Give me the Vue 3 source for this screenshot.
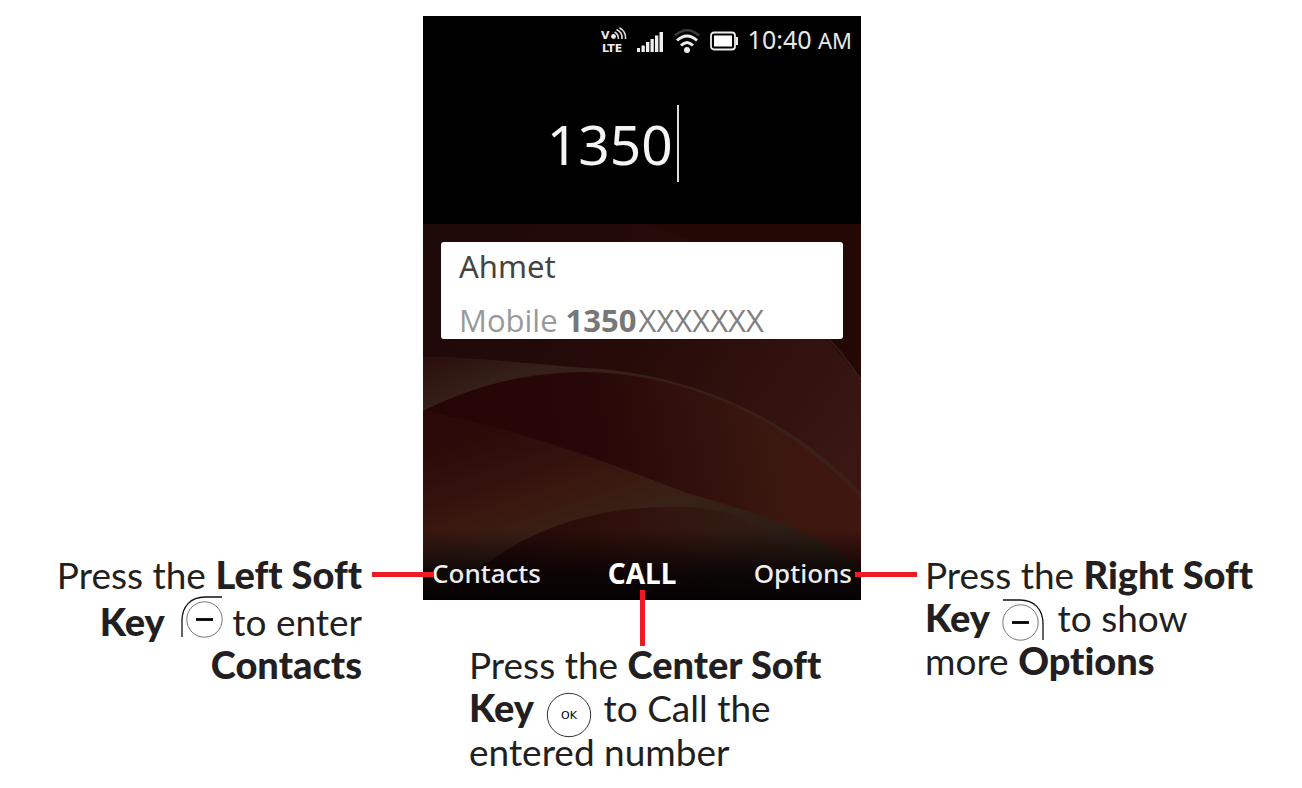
<script setup>
import { ref } from 'vue'

const number = ref('1350')
const contact = { name: 'Ahmet', type: 'Mobile', match: '1350', rest: 'XXXXXXX' }
</script>

<template>
  <main class="guide">
    <section class="side left">
      <p class="caption">
        Press the <b>Left Soft</b><br />
        <b>Key</b>
        <svg class="key-left" width="42" height="42" viewBox="0 0 42 42" role="img" aria-label="left soft key">
          <path d="M1 41V25C1 10 10 1 24 1H41" fill="none" stroke="#111" stroke-width="1.3" />
          <circle cx="23.500" cy="23.500" r="17.700" fill="none" stroke="#777" stroke-width="1" />
          <path d="M15 23.500H32" stroke="#000" stroke-width="2.800" />
        </svg>
        to enter<br />
        <b>Contacts</b>
      </p>
      <span class="lead"></span>
    </section>

    <section class="middle">
      <div class="phone">
        <header class="top">
          <div class="status">
            <svg class="volte" width="27" height="28" viewBox="0 0 27 28" role="img" aria-label="VoLTE">
              <text x="0" y="12" class="net">V</text>
              <text x="1" y="25" class="net">LTE</text>
              <circle cx="12.500" cy="9.500" r="2.400" fill="#eee" />
              <path d="M13.500 5Q17.500 7 17.500 12M15.500 2.500Q21.500 5 21 12M18.500 0.800Q25.500 5 24.500 12" fill="none" stroke="#ddd" stroke-width="1.600" />
            </svg>
            <svg class="signal" width="27" height="23" viewBox="0 0 27 23" role="img" aria-label="signal">
              <path d="M0 18h3v4H0zM4.500 15.500h3.300V22h-3.300zM9 12h3.300v10H9zM13.500 9h3.300v13h-3.300zM18 5.500h3.300V22h-3.300zM22.500 2h3.500v20h-3.500z" fill="#eee" />
            </svg>
            <svg class="wifi" width="28" height="26" viewBox="0 0 28 26" fill="none" role="img" aria-label="wifi">
              <path d="M2 7.500Q14-3 26 7.500" stroke="#3a3a3a" stroke-width="2.600" />
              <path d="M4 12.500Q14 3.500 24 12.500" stroke="#eee" stroke-width="3" />
              <path d="M8 17.500Q14 11.500 20 17.500" stroke="#eee" stroke-width="3" />
              <circle cx="14" cy="22" r="3" fill="#eee" />
            </svg>
            <svg class="battery" width="29" height="20" viewBox="0 0 29 20" role="img" aria-label="battery">
              <rect x="1" y="1.500" width="24" height="17" rx="3" fill="none" stroke="#eee" stroke-width="1.800" />
              <rect x="4" y="4.500" width="18" height="11" fill="#fff" />
              <path d="M26 6h2v8h-2z" fill="#eee" />
            </svg>
            <time class="clock">10:40 <small>AM</small></time>
          </div>
          <div class="dial">
            <input v-model="number" class="digits" type="tel" aria-label="Phone number" />
            <span class="caret"></span>
          </div>
        </header>

        <div class="screen">
          <svg class="wallpaper" viewBox="0 0 438 376" preserveAspectRatio="none" aria-hidden="true">
            <defs>
              <linearGradient id="base" x1="0" y1="0" x2="1" y2="0.6">
                <stop offset="0" stop-color="#1d0908" />
                <stop offset="0.5" stop-color="#260b09" />
                <stop offset="1" stop-color="#3a1712" />
              </linearGradient>
              <linearGradient id="rim" x1="0" y1="0" x2="1" y2="0">
                <stop offset="0" stop-color="#35201a" />
                <stop offset="0.5" stop-color="#362017" />
                <stop offset="1" stop-color="#3b2018" />
              </linearGradient>
              <linearGradient id="glow" gradientUnits="userSpaceOnUse" x1="0" y1="130" x2="20" y2="180">
                <stop offset="0" stop-color="#2a0d0a" />
                <stop offset="1" stop-color="#2a0d0a" stop-opacity="0" />
              </linearGradient>
              <linearGradient id="petal" x1="0" y1="0.2" x2="1" y2="0.1">
                <stop offset="0" stop-color="#260507" />
                <stop offset="0.4" stop-color="#280708" />
                <stop offset="0.75" stop-color="#39170f" />
                <stop offset="1" stop-color="#421611" />
              </linearGradient>
              <linearGradient id="fold" gradientUnits="userSpaceOnUse" x1="120" y1="190" x2="180" y2="370">
                <stop offset="0" stop-color="#2b0a09" />
                <stop offset="0.4" stop-color="#3a170f" />
                <stop offset="0.65" stop-color="#382216" />
                <stop offset="1" stop-color="#2c1d15" />
              </linearGradient>
              <linearGradient id="hill" x1="0" y1="0" x2="1" y2="0">
                <stop offset="0" stop-color="#1d0606" />
                <stop offset="0.5" stop-color="#2f100b" />
                <stop offset="1" stop-color="#32190f" stop-opacity="0" />
              </linearGradient>
              <linearGradient id="shade" x1="0" y1="0" x2="0" y2="1">
                <stop offset="0" stop-color="#060203" stop-opacity="0" />
                <stop offset="0.6" stop-color="#060203" stop-opacity="0.8" />
                <stop offset="1" stop-color="#060203" />
              </linearGradient>
            </defs>
            <rect width="438" height="376" fill="url(#base)" />
            <path d="M225 0Q350 40 438 156V0Z" fill="#240806" />
            <path d="M395 105Q418 125 438 156" fill="none" stroke="#3a2018" stroke-width="1.500" />
            <path d="M0 133C60 134 110 140 164 144C270 150 370 195 438 269V376H0Z" fill="url(#rim)" />
            <path d="M0 133C60 134 110 140 164 144L164 200H0Z" fill="url(#glow)" />
            <path d="M0 187C50 162 100 149 160 148C270 149 370 200 438 275V376H0Z" fill="url(#petal)" />
            <path d="M0 187C90 203 190 240 264 269C330 288 390 305 438 345V376H0Z" fill="url(#fold)" />
            <path d="M70 335C120 300 180 284 240 283C310 280 360 300 400 376H0Z" fill="url(#hill)" />
            <rect y="306" width="438" height="70" fill="url(#shade)" />
          </svg>
          <article class="card">
            <div class="name">{{ contact.name }}</div>
            <div class="line">{{ contact.type }} <b>{{ contact.match }}</b><span>{{ contact.rest }}</span></div>
          </article>
          <nav class="softkeys">
            <button type="button">Contacts</button>
            <button type="button" class="call">CALL</button>
            <button type="button">Options</button>
          </nav>
        </div>
      </div>

      <div class="below">
        <span class="drop"></span>
        <p class="caption">
          Press the <b>Center Soft</b><br />
          <b>Key</b>
          <svg class="key-ok" width="46" height="46" viewBox="0 0 46 46" role="img" aria-label="OK key">
            <circle cx="23" cy="23" r="21.700" fill="none" stroke="#333" stroke-width="1" />
            <text x="23" y="27" class="ok" text-anchor="middle">OK</text>
          </svg>
          to Call the<br />
          entered number
        </p>
      </div>
    </section>

    <section class="side right">
      <span class="lead"></span>
      <p class="caption">
        Press the <b>Right Soft</b><br />
        <b>Key</b>
        <svg class="key-right" width="42" height="42" viewBox="0 0 42 42" role="img" aria-label="right soft key">
          <path d="M1 1H18C32 1 41 10 41 25V41" fill="none" stroke="#111" stroke-width="1.3" />
          <circle cx="18.500" cy="23.500" r="17.700" fill="none" stroke="#777" stroke-width="1" />
          <path d="M10 23.500H27" stroke="#000" stroke-width="2.800" />
        </svg>
        to show<br />
        more <b>Options</b>
      </p>
    </section>
  </main>
</template>

<style>
body {
  background: #fff;
}
</style>

<style scoped>
.guide {
  display: grid;
  grid-template-columns: 423fr 438fr 441fr;
  padding-top: 16px;
  font-family: Lato, "Open Sans", sans-serif;
  color: #231f20;
}
.side {
  display: flex;
  align-items: flex-start;
  min-width: 0;
  padding-top: 537px;
  z-index: 1;
}
.left {
  justify-content: flex-end;
  gap: 10px;
  text-align: right;
}
.right {
  gap: 8px;
}
.caption {
  margin: 0;
  font-size: 37px;
  line-height: 43px;
  white-space: nowrap;
  font-variant-ligatures: none;
}
.caption b {
  font-size: 38px;
  font-weight: 900;
  line-height: 40px;
}
.lead {
  flex: none;
  width: 62px;
  height: 5px;
  margin-top: 19px;
  background: #ed1c24;
}
.left .lead {
  margin-right: -11px;
}
.right .lead {
  margin-left: -6px;
}
.key-left {
  margin: 0 0 0 16px;
  vertical-align: -2px;
}
.key-right {
  margin: -2px 4px -2px 12px;
  vertical-align: -7px;
}
.key-ok {
  margin: -8px 2px -8px 12px;
  vertical-align: -8px;
}
.ok {
  font: 11px "DejaVu Sans", sans-serif;
  fill: #000;
}
.phone {
  display: flex;
  flex-direction: column;
  aspect-ratio: 3 / 4;
  background: #000;
  font-family: "Noto Sans", "Open Sans", sans-serif;
}
.top {
  padding-bottom: 42px;
}
.status {
  display: flex;
  align-items: center;
  justify-content: flex-end;
  height: 46px;
  padding: 2px 9px 0 0;
  gap: 9px;
  color: #e8e8e8;
}
.volte {
  overflow: visible;
}
.net {
  font: bold 11px "DejaVu Sans", sans-serif;
  fill: #eee;
}
.clock {
  font-size: 25px;
  line-height: 32px;
  margin-bottom: 4px;
}
.clock small {
  font-size: 22px;
}
.dial {
  display: flex;
  align-items: center;
  gap: 4px;
  padding-top: 41px;
}
.digits {
  width: 57%;
  height: 77px;
  padding: 0;
  border: 0;
  outline: 0;
  background: transparent;
  color: #f4f4f4;
  font: 55px "Noto Sans", "Open Sans", sans-serif;
  text-align: right;
}
.caret {
  width: 2px;
  height: 77px;
  background: #ddd;
}
.screen {
  position: relative;
  display: flex;
  flex: 1;
  flex-direction: column;
  justify-content: space-between;
}
.wallpaper {
  position: absolute;
  inset: 0;
  width: 100%;
  height: 100%;
}
.card {
  position: relative;
  margin: 18px 18px 0;
  padding: 0 18px;
  border-radius: 3px;
  background: #fff;
  font-size: 31px;
}
.name {
  height: 50px;
  line-height: 48px;
  color: #444;
}
.line {
  height: 47px;
  line-height: 56px;
  font-family: "Open Sans", "Noto Sans", sans-serif;
  color: #999;
}
.line b {
  font-weight: 700;
  color: #777;
}
.line span {
  margin-left: 2px;
  color: #808080;
}
.softkeys {
  position: relative;
  display: grid;
  grid-template-columns: 1fr auto 1fr;
  align-items: center;
  padding: 0 9px 9px;
}
.softkeys button {
  padding: 0;
  border: 0;
  background: none;
  color: #eee;
  font: 500 26px/36px "Noto Sans", "Open Sans", sans-serif;
  text-align: left;
}
.softkeys button:last-child {
  text-align: right;
}
.softkeys .call {
  color: #fff;
  font-size: 28px;
  font-weight: 700;
}
.below {
  position: relative;
  display: flex;
  flex-direction: column;
  margin-top: -10px;
  padding-left: 46px;
}
.drop {
  width: 5px;
  height: 56px;
  margin-left: 171px;
  margin-bottom: -3px;
  background: #ed1c24;
}
</style>
